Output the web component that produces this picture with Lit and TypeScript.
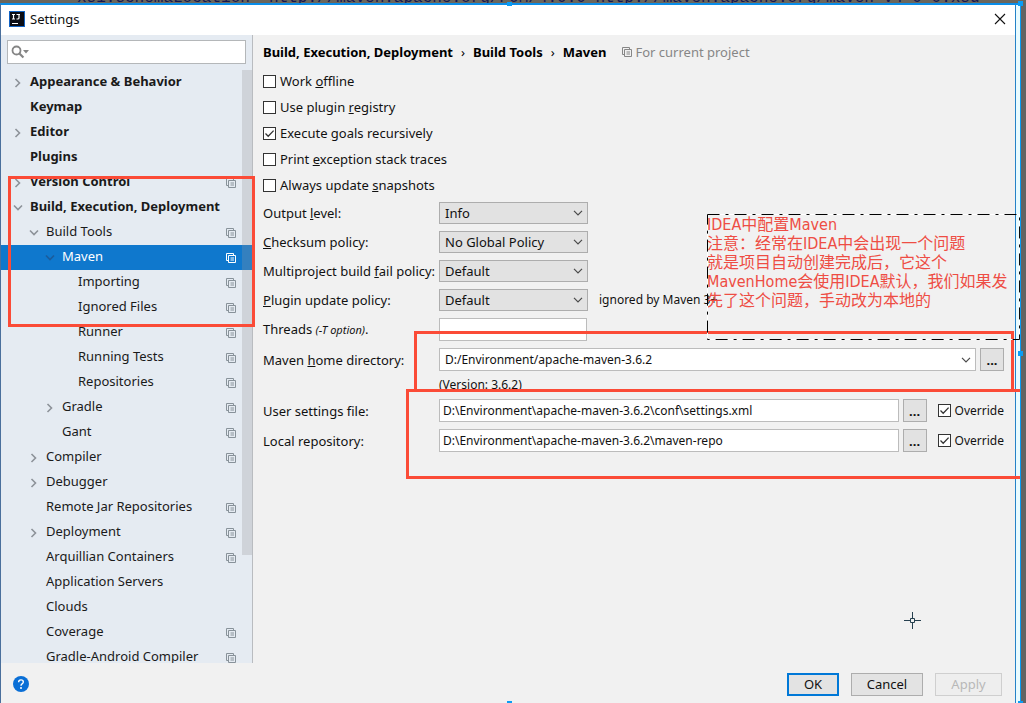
import { LitElement, html, css, svg, nothing } from "lit";
import { customElement, property } from "lit/decorators.js";

interface TreeItem {
  name: string;
  depth: number;
  arrow?: "open" | "closed";
  bold?: boolean;
  scoped?: boolean;
  selected?: boolean;
}

const TREE: TreeItem[] = [
  { name: "Appearance & Behavior", depth: 0, arrow: "closed", bold: true },
  { name: "Keymap", depth: 0, bold: true },
  { name: "Editor", depth: 0, arrow: "closed", bold: true },
  { name: "Plugins", depth: 0, bold: true },
  { name: "Version Control", depth: 0, arrow: "closed", bold: true, scoped: true },
  { name: "Build, Execution, Deployment", depth: 0, arrow: "open", bold: true },
  { name: "Build Tools", depth: 1, arrow: "open", scoped: true },
  { name: "Maven", depth: 2, arrow: "open", scoped: true, selected: true },
  { name: "Importing", depth: 3, scoped: true },
  { name: "Ignored Files", depth: 3, scoped: true },
  { name: "Runner", depth: 3, scoped: true },
  { name: "Running Tests", depth: 3, scoped: true },
  { name: "Repositories", depth: 3, scoped: true },
  { name: "Gradle", depth: 2, arrow: "closed", scoped: true },
  { name: "Gant", depth: 2, scoped: true },
  { name: "Compiler", depth: 1, arrow: "closed", scoped: true },
  { name: "Debugger", depth: 1, arrow: "closed" },
  { name: "Remote Jar Repositories", depth: 1, scoped: true },
  { name: "Deployment", depth: 1, arrow: "closed", scoped: true },
  { name: "Arquillian Containers", depth: 1, scoped: true },
  { name: "Application Servers", depth: 1 },
  { name: "Clouds", depth: 1 },
  { name: "Coverage", depth: 1, scoped: true },
  { name: "Gradle-Android Compiler", depth: 1, scoped: true },
];

const scopeIcon = html`<svg class="scope" width="10" height="10" viewBox="0 0 10 10" fill="none" stroke="currentColor" aria-hidden="true">
  <path d="M2.5 7.5H.5V.5H7.5V2.5M2.5 2.5H9.5V9.5H2.5zM4.5 5H8M4.5 7H8" />
</svg>`;

const chevron = html`<svg class="chevron" width="10" height="6" viewBox="0 0 10 6" fill="none" stroke="#4a4a4a" stroke-width="1.2" aria-hidden="true">
  <path d="M1 .8L5 4.8L9 .8" />
</svg>`;

@customElement("settings-tree")
export class SettingsTree extends LitElement {
  static styles = css`
    :host { display: block; overflow: hidden; position: relative; min-height: 0; }
    .list { list-style: none; margin: 0; padding: 0; }
    .row {
      display: flex; align-items: center; height: 25px; box-sizing: border-box;
      padding: 0 16px 0 12px; color: #1a1a1a; text-decoration: none; white-space: nowrap;
    }
    .d1 { padding-left: 28px; }
    .d2 { padding-left: 44px; }
    .d3 { padding-left: 60px; }
    .bold { font-weight: 700; }
    .selected { background: #0f78cd; color: #fff; }
    .arrow { width: 17px; flex: none; display: flex; color: #8d9299; }
    .selected .arrow { color: #1b5c9c; }
    .name { flex: 1; padding-bottom: 4px; }
    .scope { color: #88929a; }
    .selected .scope { color: #fff; }
    .thumb { position: absolute; top: 0; right: 0; width: 10px; height: 485px; background: rgba(150, 150, 155, 0.28); }
  `;

  private arrow(kind?: "open" | "closed") {
    if (!kind) return nothing;
    const d = kind === "open" ? "M1 2.5L5 6.5L9 2.5" : "M2.5 1L6.5 5L2.5 9";
    return html`<svg width="10" height="10" viewBox="0 0 10 10" fill="none" stroke="currentColor" stroke-width="1.6">${svg`<path d=${d} />`}</svg>`;
  }

  render() {
    return html`
      <ul class="list">
        ${TREE.map(
          (t) => html`<li>
            <a href="#" class="row d${t.depth} ${t.bold ? "bold" : ""} ${t.selected ? "selected" : ""}">
              <span class="arrow">${this.arrow(t.arrow)}</span>
              <span class="name">${t.name}</span>
              ${t.scoped ? scopeIcon : nothing}
            </a>
          </li>`
        )}
      </ul>
      <div class="thumb"></div>
    `;
  }
}

@customElement("check-field")
export class CheckField extends LitElement {
  @property({ type: Boolean }) checked = false;
  static styles = css`
    :host { display: block; }
    .field { display: flex; align-items: center; gap: 4px; height: 26px; white-space: nowrap; }
    .wrap { display: grid; width: 13px; height: 13px; }
    .box { appearance: none; grid-area: 1 / 1; margin: 0; width: 13px; height: 13px; box-sizing: border-box; border: 1px solid #333; background: #fff; }
    .tick { grid-area: 1 / 1; pointer-events: none; visibility: hidden; }
    .box:checked + .tick { visibility: visible; }
  `;
  render() {
    return html`<label class="field">
      <span class="wrap">
        <input class="box" type="checkbox" .checked=${this.checked} />
        <svg class="tick" width="13" height="13" viewBox="0 0 13 13" fill="none" stroke="#333" stroke-width="1.3"><path d="M2.5 6.5L5.2 9.2L10.6 3.6" /></svg>
      </span>
      <span><slot></slot></span>
    </label>`;
  }
}

@customElement("app-root")
export class AppRoot extends LitElement {
  static styles = css`
    :host {
      display: grid; grid-template-rows: 3px minmax(0, 1fr); height: 100vh; position: relative; overflow: hidden;
      background: #646464; color: #111;
      font: 13px/18px "Noto Sans", "Noto Sans CJK SC", sans-serif;
    }
    .code {
      display: flex; align-items: flex-end; overflow: hidden; padding-left: 77px; background: #6b665c; color: #17174f;
      font: 16px/10px "Liberation Mono", monospace; white-space: pre;
    }
    .frame {
      display: grid; margin-right: 5px; padding-right: 4px; min-height: 0;
      background: #e8fbff; border-top: 2px solid #0a8de8; border-right: 1px solid #0a9cf5; border-left: 1px solid #4a6f9c;
    }
    .window {
      display: grid; grid-template-rows: 30px minmax(0, 1fr) 40px; min-height: 0;
      background: #f1f1f1; border-right: 1px solid #2482c8;
    }
    .titlebar { display: flex; align-items: center; gap: 5px; padding: 0 9px 2px 8px; background: #fff; }
    .title { flex: 1; margin: 0; font-size: 13px; font-weight: 400; }
    .close { display: flex; padding: 0; border: 0; background: none; }
    .body { display: grid; grid-template-columns: 252px minmax(0, 1fr); min-height: 0; }
    .side {
      display: grid; grid-template-rows: 24px minmax(0, 1fr); row-gap: 6px; padding-top: 5px; min-height: 0;
      background: #e5ebf2; border-right: 1px solid #b9bcc0;
    }
    .search { display: flex; align-items: center; gap: 2px; margin: 0 6px; padding-left: 3px; background: #fff; border: 1px solid #b4b7b9; }
    .search-box { flex: 1; min-width: 0; border: 0; outline: 0; background: none; font: inherit; }
    .main { padding: 7px 11px 0 10px; min-width: 0; }
    .crumbs { display: flex; align-items: center; gap: 8px; height: 20px; margin-bottom: 6px; color: #000; font-weight: 700; white-space: nowrap; }
    .sep { font-weight: 400; }
    .project { display: flex; align-items: center; gap: 3px; margin-left: 8px; color: #868686; font-weight: 400; }
    .form { display: grid; grid-template-columns: 172px minmax(0, 1fr); column-gap: 4px; row-gap: 7px; align-items: center; margin-top: 4px; }
    .label { white-space: nowrap; }
    .hint { font-size: 11px; font-style: italic; }
    .line { display: flex; align-items: center; gap: 4px; }
    .pick { display: grid; width: 149px; align-items: center; }
    .select {
      appearance: none; grid-area: 1 / 1; width: 100%; height: 22px; padding: 0 24px 0 5px; margin: 0; box-sizing: border-box;
      background: #e2e2e2; border: 1px solid #adadad; border-radius: 0; color: #111; font: inherit;
    }
    .chevron { grid-area: 1 / 1; justify-self: end; margin-right: 5px; pointer-events: none; }
    .note { margin-left: 7px; font-size: 12px; white-space: nowrap; }
    .text { height: 23px; padding: 0 3px; box-sizing: border-box; min-width: 0; border: 1px solid #bcbcbc; background: #fff; color: #111; font: inherit; font-size: 12px; }
    .short { width: 148px; }
    .grow { flex: 1; }
    .combo { flex: 1; display: grid; align-items: center; }
    .combo .text { grid-area: 1 / 1; padding-left: 5px; }
    .more { width: 24px; height: 23px; padding: 0; border: 1px solid #adadad; background: #e2e2e2; color: #111; font: inherit; font-weight: 700; }
    .override { margin-left: 7px; height: 23px; display: flex; align-items: center; font-size: 12px; }
    .version { grid-column: 2; height: 14px; line-height: 14px; font-size: 12px; }
    .footer { display: flex; align-items: center; gap: 12px; padding: 2px 13px 0 12px; }
    .help { display: flex; margin-right: auto; padding: 0; border: 0; background: none; }
    .btn { height: 23px; width: 72px; padding: 0; border: 1px solid #adadad; background: #e3e3e3; color: #111; font: inherit; }
    .ok { width: 52px; border: 2px solid #0078d7; }
    .apply { width: 67px; border-color: #cfcfcf; background: #eee; color: #b8b8b8; }
    .mark { position: absolute; box-sizing: border-box; border: 3px solid #fb4b37; pointer-events: none; }
    .mark-tree { left: 8px; top: 176px; width: 247px; height: 151px; }
    .mark-home { left: 414px; right: 12px; top: 331px; height: 61px; }
    .mark-files { left: 406px; right: 6px; top: 389px; height: 90px; border-right: 0; }
    .callout { position: absolute; left: 707px; right: 6px; top: 214px; height: 126px; color: #ee4d44; font: 16px/19px "DejaVu Sans Condensed", "Noto Sans CJK SC", sans-serif; }
    .outline { position: absolute; inset: 0; width: 100%; height: 100%; }
    .callout-text { margin: 0; padding-top: 1px; white-space: pre; }
    .cursor { position: absolute; left: 904px; top: 612px; }
    .grip { position: absolute; width: 5px; height: 5px; background: #0a9cf5; }
    .g1 { right: 3px; top: 1px; }
    .g2 { right: 3px; top: 351px; }
    .g3 { right: 3px; bottom: 0; height: 2px; }
    .g4 { left: 507px; top: 2px; height: 4px; }
    .g5 { left: 507px; bottom: 0; height: 2px; }
  `;

  private picker(id: string, value: string) {
    return html`<span class="pick"><select class="select" id=${id}><option>${value}</option></select>${chevron}</span>`;
  }

  private fileRow(id: string, value: string) {
    return html`<div class="line">
      <input class="text grow" id=${id} .value=${value} />
      <button class="more" aria-label="Browse">...</button>
      <div class="override"><check-field checked>Override</check-field></div>
    </div>`;
  }

  render() {
    return html`
      <div class="code">xsi:schemaLocation="http://maven.apache.org/POM/4.0.0 http://maven.apache.org/maven-v4_0_0.xsd"</div>
      <div class="frame">
        <div class="window">
          <header class="titlebar">
            <svg width="16" height="16" viewBox="0 0 16 16" aria-hidden="true">
              <rect width="16" height="16" fill="#1263c4" /><rect x="1" y="1" width="14" height="14" fill="#0b0d14" />
              <path d="M3 3.5H6M4.5 3.5V8M3 8H6M7.5 3.5H11M10 3.5V7Q10 8 8.8 8H7.5M3 12.5H9" stroke="#fff" stroke-width="1.2" fill="none" />
            </svg>
            <h1 class="title">Settings</h1>
            <button class="close" aria-label="Close">
              <svg width="12" height="12" viewBox="0 0 12 12" stroke="#111" stroke-width="1.1"><path d="M1 1L11 11M11 1L1 11" /></svg>
            </button>
          </header>
          <div class="body">
            <nav class="side">
              <div class="search">
                <svg width="19" height="14" viewBox="0 0 19 14" fill="none" aria-hidden="true">
                  <circle cx="5.5" cy="5.5" r="4" stroke="#858585" stroke-width="1.8" /><path d="M8.4 8.4L12.4 12.6" stroke="#858585" stroke-width="2.2" />
                  <path d="M12 5H18L15 8.5z" fill="#858585" />
                </svg>
                <input class="search-box" aria-label="Search settings" />
              </div>
              <settings-tree></settings-tree>
            </nav>
            <main class="main">
              <div class="crumbs">
                <span>Build, Execution, Deployment</span><span class="sep">›</span><span>Build Tools</span><span class="sep">›</span><span>Maven</span>
                <span class="project">${scopeIcon}For current project</span>
              </div>
              <check-field>Work <u>o</u>ffline</check-field>
              <check-field>Use plugin <u>r</u>egistry</check-field>
              <check-field checked>Execute <u>g</u>oals recursively</check-field>
              <check-field>Print <u>e</u>xception stack traces</check-field>
              <check-field>Always update <u>s</u>napshots</check-field>
              <div class="form">
                <label class="label" for="level">Output <u>l</u>evel:</label>
                ${this.picker("level", "Info")}
                <label class="label" for="checksum"><u>C</u>hecksum policy:</label>
                ${this.picker("checksum", "No Global Policy")}
                <label class="label" for="fail">Multiproject build <u>f</u>ail policy:</label>
                ${this.picker("fail", "Default")}
                <label class="label" for="update"><u>P</u>lugin update policy:</label>
                <div class="line">${this.picker("update", "Default")}<span class="note">ignored by Maven 3+</span></div>
                <label class="label" for="threads">Threads <span class="hint">(-T option)</span>.</label>
                <input class="text short" id="threads" />
                <label class="label" for="home">Maven <u>h</u>ome directory:</label>
                <div class="line">
                  <span class="combo"><input class="text" id="home" .value=${"D:/Environment/apache-maven-3.6.2"} />${chevron}</span>
                  <button class="more" aria-label="Browse">...</button>
                </div>
                <div class="version">(Version: 3.6.2)</div>
                <label class="label" for="user">User settings file:</label>
                ${this.fileRow("user", "D:\\Environment\\apache-maven-3.6.2\\conf\\settings.xml")}
                <label class="label" for="repo">Local repository:</label>
                ${this.fileRow("repo", "D:\\Environment\\apache-maven-3.6.2\\maven-repo")}
              </div>
            </main>
          </div>
          <footer class="footer">
            <button class="help" aria-label="Help">
              <svg width="16" height="16" viewBox="0 0 16 16"><circle cx="8" cy="8" r="8" fill="#0a6fd6" />
                <path d="M5.6 6.2Q5.6 3.9 8 3.9Q10.3 3.9 10.3 5.9Q10.3 7 9.1 7.8Q8 8.5 8 9.7" fill="none" stroke="#fff" stroke-width="1.4" /><circle cx="8" cy="11.9" r="1" fill="#fff" /></svg>
            </button>
            <button class="btn ok">OK</button>
            <button class="btn">Cancel</button>
            <button class="btn apply" disabled>Apply</button>
          </footer>
        </div>
      </div>
      <div class="mark mark-tree"></div>
      <div class="mark mark-home"></div>
      <div class="mark mark-files"></div>
      <div class="callout">
        <svg class="outline" fill="none" aria-hidden="true">
          <rect x="0.5" y="0.5" width="99.7%" height="125" stroke="#fff" />
          <rect x="0.5" y="0.5" width="99.7%" height="125" stroke="#000" stroke-dasharray="12 6 3 6" />
        </svg>
        <p class="callout-text">IDEA中配置Maven
注意：经常在IDEA中会出现一个问题
就是项目自动创建完成后，它这个
MavenHome会使用IDEA默认，我们如果发
先了这个问题，手动改为本地的</p>
      </div>
      <svg class="cursor" width="17" height="17" viewBox="0 0 17 17" fill="none" stroke="#26404f" aria-hidden="true">
        <path d="M8.5 0V6M8.5 11V17M0 8.5H6M11 8.5H17M6.5 6.5H10.5V10.5H6.5z" />
      </svg>
      <i class="grip g1"></i><i class="grip g2"></i><i class="grip g3"></i><i class="grip g4"></i><i class="grip g5"></i>
    `;
  }
}
